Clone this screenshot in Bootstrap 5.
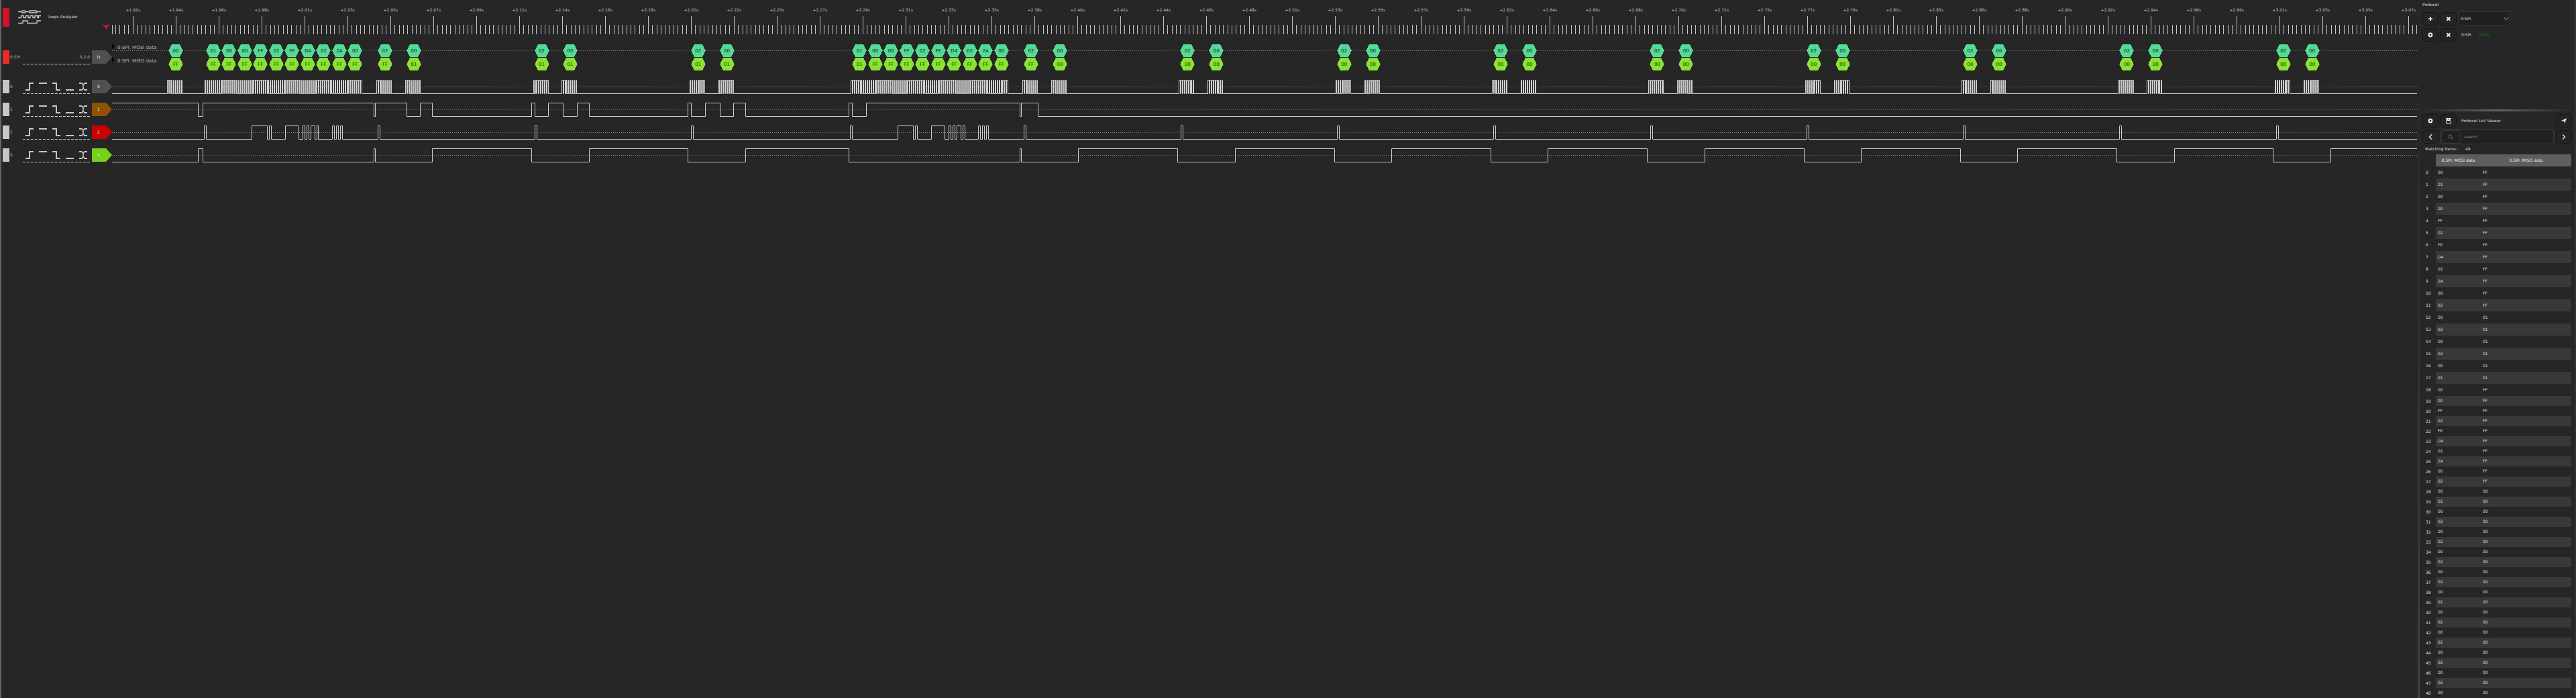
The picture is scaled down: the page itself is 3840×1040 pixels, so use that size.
<!DOCTYPE html>
<html lang="en" data-bs-theme="dark">
<head>
<meta charset="utf-8">
<title>Logic Analyzer</title>
<link href="https://cdn.jsdelivr.net/npm/bootstrap@5.3.0/dist/css/bootstrap.min.css" rel="stylesheet">
<style>
html,body{height:1040px}
body{margin:0;background:#262626;color:#dedede;font-family:"DejaVu Sans",sans-serif;font-size:6px;line-height:8px;overflow:hidden}
svg{display:block}
svg text{font-family:"DejaVu Sans",sans-serif}
.app-shell{width:3840px;height:1040px;border-left:2px solid #5f686b}
.chan-col{width:165px;padding-left:2px}
.title-bar{height:75px;padding-top:12px}
.title-flag{width:10px;height:28px;background:#d41028;flex:none}
.title-logo{margin:3px 11px 0 13px;flex:none}
.title-name{margin-top:9px}
.chan-row{height:20px;margin-bottom:14px}
.chan-row>div{flex:none}
.chan-row.decoder{margin-bottom:24px}
.chan-flag{width:10px;height:20px;background:#c5c7c8}
.chan-name{width:20px;padding:6px 0 0 1px;color:#b4b4b4;white-space:nowrap}
.chan-mid{width:100px;height:21px}
.chan-mid .pins{text-align:right;padding-top:6px;height:20px;color:#b8b8b8}
.chan-mid .dash{height:1px;background:repeating-linear-gradient(90deg,#c8c8c8 0 4px,transparent 4px 6px)}
.chan-tag{width:30px;height:20px;margin-left:3px;padding:6px 10px 0 0;text-align:center;color:#eee;clip-path:polygon(0 0,21px 0,100% 50%,21px 100%,0 100%)}
.plot-area{width:3437px}
.split-v{width:3px;background:linear-gradient(#262626,#2c2c2c 30%,#414141)}
.side{width:231px}
.edge-r{width:2px;background:#2d3439}
.side-pad{padding:0 4px}
.tool-btn{width:24px;height:20px;padding:0;border:1px solid #171717;border-radius:5px;background:#242424;color:#eee;display:flex;align-items:center;justify-content:center;flex:none}
.tool-row{height:22px;gap:3px;margin-bottom:2px}
.proto-pane{height:163px}
.pick{width:77px;height:22px;background:#202020;border:1px solid #393939;border-radius:2px;padding:0 1px 0 2px}
.find-box{width:169px;height:22px;background:#202020;border:1px solid #393939;border-radius:2px;color:#8c8c8c}
.find-ico{width:29px;height:20px;border:1px solid #363636;border-radius:4px;margin-right:5px;display:flex;align-items:center;justify-content:center}
.split-h{height:3px;background:linear-gradient(90deg,#262626,#636363 50%,#262626)}
.done{color:#147d14;margin-left:8px}
.list-head{height:18px;margin-left:24px;width:202px;background:#5e5e5e;color:#f2f2f2}
.item{height:18px;width:226px}
.item .idx{width:24px;padding:5px 0 0 9px}
.item .vals{width:202px;padding:5px 0 0 3px}
.item:nth-child(even) .vals{background:#383838}
.item .mosi{width:67px}
.item.tight{height:15px}
.item.tight .vals{padding-top:3px}
.item.tight .idx{padding-top:4px}
</style>
<script src="https://cdn.jsdelivr.net/npm/bootstrap@5.3.0/dist/js/bootstrap.bundle.min.js"></script>
</head>
<body>
<div class="app-shell d-flex">
  <div class="chan-col flex-shrink-0">
    <div class="title-bar d-flex align-items-start">
      <div class="title-flag"></div>
      <svg class="title-logo" width="34" height="21" viewBox="0 0 34 21" fill="none" stroke="#d0d0d0" stroke-width="1.3">
        <path d="M0 2.5H5L6.5 1H10L11.5 2.5L10 4H6.5L5 2.5M11.5 2.5H16L17.5 1H27L28.5 2.5L27 4H17.5L16 2.5M28.5 2.5H34"/>
        <path d="M0 11.5H4.5V8.5H8V11.5H11.5V8.5H15V11.5H18V8.5H22V11.5H25V8.5H29V11.5H30.500V8.500H34"/>
        <path d="M0 19.500H7V16H14V19.500H28V16H34"/>
      </svg>
      <div class="title-name">Logic Analyzer</div>
      <svg class="ms-auto" style="margin:24px 3px 0 0" width="11" height="8" viewBox="0 0 11 8"><path d="M0 0L5.500 2L11 0L5.500 8Z" fill="#dc1230"/></svg>
    </div>
    <div id="channels"></div>
  </div>
  <div class="plot-area flex-shrink-0"><svg id="plot" width="3437" height="260" viewBox="167 0 3437 260"></svg></div>
  <div class="split-v flex-shrink-0"></div>
  <div class="side flex-shrink-0">
    <div class="proto-pane side-pad">
      <div style="padding-top:3px;height:17px">Protocol</div>
      <div class="tool-row d-flex align-items-center">
        <button class="tool-btn"><svg width="8" height="8"><path d="M4 1V7M1 4H7" stroke="currentColor" stroke-width="1.700"/></svg></button>
        <button class="tool-btn"><svg width="8" height="8"><path d="M1.500 1.500L6.500 6.500M6.500 1.500L1.500 6.500" stroke="currentColor" stroke-width="1.800"/></svg></button>
        <div class="pick d-flex align-items-center justify-content-between"><span>0:SPI</span><svg width="8" height="6"><path d="M.5 1L4 4.500L7.500 1" fill="none" stroke="#bbb"/></svg></div>
      </div>
      <div class="tool-row d-flex align-items-center">
        <button class="tool-btn"><svg width="8" height="8"><circle cx="4" cy="4" r="2.400" fill="none" stroke="currentColor" stroke-width="2"/></svg></button>
        <button class="tool-btn"><svg width="8" height="8"><path d="M1.500 1.500L6.500 6.500M6.500 1.500L1.500 6.500" stroke="currentColor" stroke-width="1.800"/></svg></button>
        <span style="padding-left:4px">0:SPI</span><span class="done">100%</span>
      </div>
    </div>
    <div class="split-h"></div>
    <div class="side-pad" style="padding-top:3px">
      <div class="tool-row d-flex align-items-center">
        <button class="tool-btn"><svg width="8" height="8"><circle cx="4" cy="4" r="2.400" fill="none" stroke="currentColor" stroke-width="2"/></svg></button>
        <button class="tool-btn"><svg width="8" height="8"><path d="M0 0H8V8H0ZM1 1V7H7V1H6V4H2V1ZM4 1V3H5V1Z" fill="currentColor" fill-rule="evenodd"/></svg></button>
        <span style="padding-left:4px">Protocol List Viewer</span>
        <button class="tool-btn ms-auto"><svg width="8" height="8"><path d="M8 0L0 4L4 4.500L5 8Z" fill="currentColor"/></svg></button>
      </div>
      <div class="tool-row d-flex align-items-center">
        <button class="tool-btn"><svg width="6" height="8"><path d="M5 .5L1.500 4L5 7.500" fill="none" stroke="currentColor" stroke-width="1.400"/></svg></button>
        <div class="find-box d-flex align-items-center"><span class="find-ico"><svg width="9" height="9"><path d="M5.500 5.500L8.500 8.500" stroke="#777"/><circle cx="3.500" cy="3.500" r="2.600" fill="none" stroke="#777"/></svg></span>search</div>
        <button class="tool-btn ms-auto"><svg width="6" height="8"><path d="M1 .5L4.500 4L1 7.500" fill="none" stroke="currentColor" stroke-width="1.400"/></svg></button>
      </div>
      <div class="d-flex" style="height:13px;padding:1px 0 0 4px"><span style="width:60px">Matching Items:</span><span>49</span></div>
    </div>
    <div class="list-head d-flex align-items-center text-center"><span style="width:67px">0:SPI: MOSI data</span><span style="width:135px">0:SPI: MISO data</span></div>
    <div id="items"></div>
  </div>
  <div class="edge-r flex-shrink-0"></div>
</div>
<script>
// decoded SPI transfers
const head = ['01','00','00','FF','02','FE','D4','02','2A','00'];
const mosi = ['00', ...head];
for (let i = 11; i < 17; i++) mosi.push(i % 2 ? '02' : '00');
mosi.push(...head);
for (let i = 27; i < 49; i++) mosi.push(i % 2 ? '02' : '00');
const miso = mosi.map((v, i) => (i < 12 || (i > 17 && i < 28)) ? 'FF' : i < 18 ? '01' : '00');

document.getElementById('items').innerHTML = mosi.map((v, i) =>
  `<div class="item d-flex ${i > 18 ? 'tight' : ''}"><span class="idx">${i}</span><span class="vals d-flex"><span class="mosi">${v}</span><span>${miso[i]}</span></span></div>`).join('');

// channel strip
const trig = `<svg width="100" height="20" fill="none" stroke="#c8c8c8" stroke-width="2"><path d="M4 15H10V5H16M24 5H36M44 5H50V15H56M64 15H76M84 5H88.500M91.500 5H96M84 15H88.500M91.500 15H96"/><path d="M88 5L90 7.500V12.500L88 15M92 5L90 7.500M90 12.500L92 15" stroke-width="1.500"/></svg>`;
const chans = [['0:SPI','D','#505050'],['0','0','#505050'],['1','1','#8f5104'],['2','2','#cc0000'],['5','5','#74d316']];
document.getElementById('channels').innerHTML = chans.map((c, i) =>
  `<div class="chan-row d-flex ${i ? '' : 'decoder'}"><div class="chan-flag" ${i ? '' : 'style="background:#ee2a2a"'}></div><div class="chan-name">${c[0]}</div><div class="chan-mid">${i ? trig : '<div class="pins">5,2-0</div>'}<div class="dash"></div></div><div class="chan-tag" style="background:${c[2]}">${c[1]}</div></div>`).join('');

// ruler
const X0 = 167, X1 = 3603;
let s = '', ticks = '', major = '';
[167,172,178,185,191].forEach(x => ticks += `M${x}.5 37V51`);
for (let k = 0; k < 54; k++) {
  const x = 198 + 64 * k;
  major += `M${x}.5 24V51`;
  [6,13,19,25,32,38,44,51,57].forEach(d => { if (x + d < X1) ticks += `M${x + d}.5 37V51`; });
  s += `<text x="${x + .3}" y="17" font-size="6" fill="#c4c4c4" text-anchor="middle">+${(1.9181 + k * .0218).toFixed(2)}s</text>`;
}
ticks += 'M3602.5 37V51';
s += `<path d="${ticks}${major}" stroke="#c2c2c2"/>`;
[75,129,163,197,231].forEach(y => s += `<path d="M167 ${y}.5H${X1}" stroke="#7c7c7c" stroke-dasharray="1 2"/>`);
s += `<path d="M167 65L171 69L167 73ZM167 85L171 89L167 93Z" fill="#000"/>`;
s += `<g font-size="7" fill="#b4b4b4"><text x="175" y="73">0:SPI: MOSI data</text><text x="175" y="93">0:SPI: MISO data</text></g>`;

// decoded bytes
const at = [262];
for (let i = 0; i < 10; i++) at.push(317.9 + 23.5 * i);
at.push(574, 617, 807.5, 850, 1040.7, 1083.5);
for (let i = 0; i < 10; i++) at.push(1281.2 + 23.5 * i);
at.push(1537, 1580);
for (let i = 0; i < 8; i++) at.push(1770.3 + 233.35 * i, 1813.2 + 233.35 * i);
at.forEach((c, i) => {
  const h = (y, f, ink, t) => {
    const a = Math.round(c - 11), b = a + 22;
    s += `<path shape-rendering="crispEdges" d="M${a} ${y+9.5}L${a+5} ${y}H${b-5}L${b} ${y+9.5}L${b-5} ${y+19}H${a+5}Z" fill="${f}"/><text x="${c}" y="${y+12}" font-size="7" fill="${ink}" text-anchor="middle">${t}</text>`;
  };
  h(66, '#56d996', '#0c2c1b', mosi[i]); h(86, '#8ae234', '#1d3405', miso[i]);
});

// digital traces
function trace(edges, level, hi, lo) {
  let d = `M${X0} ${level ? hi : lo}`;
  edges.forEach(x => { level = !level; d += `H${x + .5}V${level ? hi : lo}`; });
  s += `<path d="${d}H${X1}" fill="none" stroke="#cdcdcd"/>`;
}
const clk = [];
at.forEach(c => { for (let k = 0; k < 16; k++) clk.push(Math.floor(c - 12.4 + k * 1.467)); });
trace(clk, false, 119.5, 139.5);
trace([295,302,557,559,606,626,644,792,797,817,839,860,878,1025,1030,1051,1073,1093,1111,1265,1270,1291,1520,1522,1547], true, 153.5, 173.5);
const d2 = [304,307,375,398,401,404,425,445,451,454,457,460,463,469,472,474,495,498,501,504,507,510,563,566,797,800,1030,1033,1267,1270,1338,1361,1364,1367,1388,1408,1414,1417,1420,1423,1426,1432,1435,1438,1458,1461,1464,1467,1470,1473,1526,1529];
[1760,1993,2226,2460,2693,2926,3159,3393].forEach(x => d2.push(x, x + 3));
trace(d2, false, 187.5, 207.5);
trace([295,302,557,559,644,792,878,1025,1111,1265,1520,1522,1607,1755,1841,1989,2074,2222,2307,2455,2541,2689,2774,2922,3007,3155,3241,3388,3474], false, 221.5, 241.5);
document.getElementById('plot').innerHTML = s;
</script>
</body>
</html>
